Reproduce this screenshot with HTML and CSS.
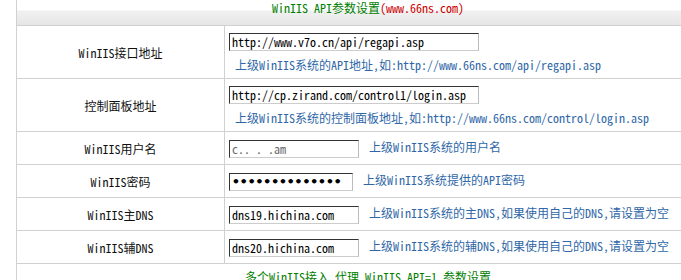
FILE: index.html
```html
<!DOCTYPE html>
<html lang="zh-CN">
<head>
  <meta charset="UTF-8">
  <title>WinIIS API参数设置</title>
  <link rel="stylesheet" href="styles.css">
</head>
<body>
  <div class="wrap">
    <table class="cfg">
      <tr class="head">
        <th colspan="2" class="title">WinIIS API参数设置<span class="site">(www.66ns.com)</span></th>
      </tr>
      <tr class="tall">
        <td class="label">WinIIS接口地址</td>
        <td class="field">
          <input class="txt w250" type="text" value="http://www.v7o.cn/api/regapi.asp">
          <div class="tip">上级WinIIS系统的API地址,如:http://www.66ns.com/api/regapi.asp</div>
        </td>
      </tr>
      <tr class="tall">
        <td class="label">控制面板地址</td>
        <td class="field">
          <input class="txt w250" type="text" value="http://cp.zirand.com/control1/login.asp">
          <div class="tip">上级WinIIS系统的控制面板地址,如:http://www.66ns.com/control/login.asp</div>
        </td>
      </tr>
      <tr class="short">
        <td class="label">WinIIS用户名</td>
        <td class="field">
          <input class="txt w130 blur" type="text" value="c.. . .am">
          <span class="tip side">上级WinIIS系统的用户名</span>
        </td>
      </tr>
      <tr class="short">
        <td class="label">WinIIS密码</td>
        <td class="field">
          <input class="txt w124 pwd" type="password" value="12345678901234">
          <span class="tip side">上级WinIIS系统提供的API密码</span>
        </td>
      </tr>
      <tr class="short">
        <td class="label">WinIIS主DNS</td>
        <td class="field">
          <input class="txt w130" type="text" value="dns19.hichina.com">
          <span class="tip side">上级WinIIS系统的主DNS,如果使用自己的DNS,请设置为空</span>
        </td>
      </tr>
      <tr class="short">
        <td class="label">WinIIS辅DNS</td>
        <td class="field">
          <input class="txt w130" type="text" value="dns20.hichina.com">
          <span class="tip side">上级WinIIS系统的辅DNS,如果使用自己的DNS,请设置为空</span>
        </td>
      </tr>
      <tr class="footrow">
        <td colspan="2" class="foot">多个WinIIS接入 代理 WinIIS API=1 参数设置</td>
      </tr>
    </table>
  </div>
</body>
</html>
```

FILE: styles.css
```css
html, body { margin: 0; overflow: hidden; background: #fff; }
body {
  font-family: "Noto Sans Mono CJK SC", "Liberation Mono", "Noto Sans CJK SC", monospace;
  font-size: 12px;
  color: #222;
}
th, td { padding: 0; }
.wrap { padding-left: 16px; }
.cfg {
  width: 704px; border-collapse: separate; border-spacing: 0;
  border-left: 1px solid #d0d0d0;
}
.cfg th, .cfg td {
  box-sizing: border-box;
  border-right: 1px solid #d0d0d0; border-bottom: 1px solid #d0d0d0;
}
.head { height: 26px; }
.tall { height: 53px; }
.short { height: 33px; }
.footrow { height: 30px; }
.title {
  vertical-align: top; padding-top: 1px;
  font-weight: normal; color: #008000; line-height: 14px;
  background: linear-gradient(#fff 0, #fff 38%, #f1f1f1 44%, #e6e6e6 100%);
}
.site { color: #cc0000; }
.label { width: 208px; text-align: center; vertical-align: middle; color: #111; }
.field { padding-left: 4px; }
.tall .field { vertical-align: top; padding-top: 5px; }
.short .field { vertical-align: middle; }
.txt {
  box-sizing: border-box; height: 18px; margin: 0; padding: 0 2px;
  font: inherit; color: #000;
  border: 1px solid; border-color: #333 #bbb #ccc #333;
  vertical-align: middle;
}
.w250 { width: 250px; }
.w130 { width: 130px; }
.w124 { width: 124px; }
.blur { color: #666; }
.pwd { font-family: "DejaVu Sans Mono", monospace; font-size: 13px; font-weight: bold; }
.tip { color: #2f67a8; line-height: 16px; }
div.tip { margin: 6px 0 0 6px; }
.side { margin-left: 4px; }
.foot { vertical-align: top; padding-top: 6px; text-align: center; line-height: 14px; color: #008000; }
```
